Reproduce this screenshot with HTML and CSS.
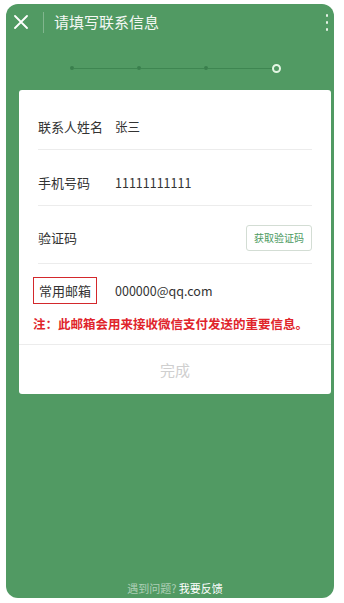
FILE: index.html
```html
<!DOCTYPE html>
<html lang="zh-CN">
<head>
<meta charset="utf-8">
<title>请填写联系信息</title>
<link rel="stylesheet" href="styles.css">
</head>
<body>
<div class="frame">
  <div class="header">
    <svg class="close" width="14" height="14" viewBox="0 0 14 14"><path d="M1 1L13 13M13 1L1 13" stroke="#fff" stroke-width="1.8" stroke-linecap="round" fill="none"/></svg>
    <span class="vdiv"></span>
    <span class="title">请填写联系信息</span>
    <span class="more"><i></i><i></i><i></i></span>
  </div>
  <div class="steps">
    <span class="dot"></span><span class="seg"></span>
    <span class="dot"></span><span class="seg"></span>
    <span class="dot"></span><span class="seg"></span>
    <span class="ring"></span>
  </div>
  <div class="card">
    <div class="row row-first">
      <span class="label">联系人姓名</span>
      <span class="value">张三</span>
    </div>
    <div class="row">
      <span class="label">手机号码</span>
      <span class="value">11111111111</span>
    </div>
    <div class="row row-code">
      <span class="label">验证码</span>
      <span class="btn">获取验证码</span>
    </div>
    <div class="email">
      <span class="label boxed">常用邮箱</span>
      <span class="value">000000@qq.com</span>
    </div>
    <div class="note">注：此邮箱会用来接收微信支付发送的重要信息。</div>
    <div class="done">完成</div>
  </div>
  <div class="spacer"></div>
  <div class="footer"><span class="muted">遇到问题?</span> <span class="link">我要反馈</span></div>
</div>
</body>
</html>
```
FILE: styles.css
```css
html, body {
  margin: 0;
  padding: 0;
  background: #ffffff;
}
body {
  font-family: "Noto Sans CJK SC", "Noto Sans", sans-serif;
  width: 344px;
  height: 603px;
  overflow: hidden;
}
.frame {
  margin: 4px 0 0 6px;
  width: 328px;
  height: 594px;
  background: #519a63;
  border-radius: 12px;
  display: flex;
  flex-direction: column;
}
.header {
  height: 36px;
  display: flex;
  align-items: center;
  padding-left: 8px;
  padding-right: 6px;
}
.close {
  display: block;
  flex: none;
}
.vdiv {
  width: 1px;
  height: 21px;
  background: rgba(255, 255, 255, 0.28);
  margin-left: 15px;
}
.title {
  margin-left: 10px;
  color: #f4f8f4;
  font-size: 15px;
  line-height: 20px;
  flex: 1;
}
.more {
  display: flex;
  flex-direction: column;
  gap: 4.5px;
  padding-top: 1px;
}
.more i {
  display: block;
  width: 2.5px;
  height: 2.5px;
  border-radius: 50%;
  background: #e6f2e6;
}
.steps {
  margin: 23px 0 0 64px;
  width: 210.5px;
  height: 10px;
  display: flex;
  align-items: center;
}
.dot {
  width: 4px;
  height: 4px;
  border-radius: 50%;
  background: #3a7f4d;
  flex: none;
}
.seg {
  flex: 1;
  height: 1px;
  background: #3e8651;
}
.ring {
  box-sizing: border-box;
  width: 9px;
  height: 9px;
  border-radius: 50%;
  border: 2px solid #e4f6e4;
  flex: none;
}
.card {
  margin: 17px 0 0 13px;
  width: 312px;
  height: 304px;
  box-sizing: border-box;
  padding-top: 4px;
  background: #ffffff;
  border-radius: 3px;
  display: flex;
  flex-direction: column;
}
.row {
  box-sizing: border-box;
  height: 56px;
  margin: 0 19px;
  padding-top: 9px;
  border-bottom: 1px solid #ececec;
  display: flex;
  align-items: center;
}
.row-code {
  height: 58px;
  padding-top: 6px;
}
.label {
  width: 77px;
  flex: none;
  font-size: 13px;
  line-height: 17px;
  color: #333333;
}
.value {
  font-size: 12.5px;
  line-height: 17px;
  color: #333333;
}
.btn {
  margin-left: auto;
  box-sizing: border-box;
  height: 26px;
  width: 66px;
  border: 1px solid #d3ddd4;
  border-radius: 3px;
  font-size: 10px;
  line-height: 24px;
  text-align: center;
  color: #4c9a5f;
}
.email {
  height: 52px;
  margin: 0 19px;
  display: flex;
  align-items: center;
}
.boxed {
  box-sizing: border-box;
  margin-left: -5px;
  width: 64px;
  height: 27px;
  padding: 4px 0 0 5px;
  border: 1px solid #d3282c;
  margin-right: 18px;
}
.note {
  height: 16px;
  font-size: 12.5px;
  line-height: 16px;
  font-weight: 600;
  color: #e0242b;
  white-space: nowrap;
  padding: 0 0 12px 14px;
  border-bottom: 1px solid #ececec;
}
.done {
  flex: 1;
  display: flex;
  align-items: center;
  justify-content: center;
  font-size: 15px;
  color: #cfcfcf;
}
.spacer {
  flex: 1;
}
.footer {
  margin-left: 13px;
  width: 312px;
  text-align: center;
  font-size: 11px;
  line-height: 16px;
  padding-bottom: 2px;
}
.muted {
  color: rgba(255, 255, 255, 0.55);
}
.link {
  color: #ffffff;
}
```
